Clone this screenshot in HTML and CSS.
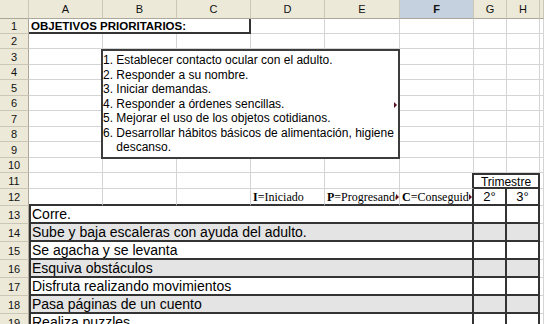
FILE: index.html
```html
<!DOCTYPE html>
<html lang="es">
<head>
    <meta charset="UTF-8">
    <title>Objetivos prioritarios</title>
    <link rel="stylesheet" href="styles.css">
</head>
<body>

    <div class="sheet">
        <div class="row h19">
            <div class="col"></div>
            <div class="col">A</div>
            <div class="col">B</div>
            <div class="col">C</div>
            <div class="col">D</div>
            <div class="col">E</div>
            <div class="col sel">F</div>
            <div class="col">G</div>
            <div class="col">H</div>
            <div class="col"></div>
        </div>

        <div class="row h15">
            <div class="num">1</div>
            <div class="cell title span3">OBJETIVOS PRIORITARIOS:</div>
            <div class="cell"></div><div class="cell"></div><div class="cell"></div>
            <div class="cell"></div><div class="cell"></div><div class="cell"></div>
        </div>
        <div class="row h15">
            <div class="num">2</div>
            <div class="cell"></div><div class="cell"></div><div class="cell"></div>
            <div class="cell"></div><div class="cell"></div><div class="cell"></div>
            <div class="cell"></div><div class="cell"></div><div class="cell"></div>
        </div>
        <div class="row h16">
            <div class="num">3</div>
            <div class="cell"></div><div class="cell"></div><div class="cell"></div>
            <div class="cell"></div><div class="cell"></div><div class="cell"></div>
            <div class="cell"></div><div class="cell"></div><div class="cell"></div>
        </div>
        <div class="row h15">
            <div class="num">4</div>
            <div class="cell"></div><div class="cell"></div><div class="cell"></div>
            <div class="cell"></div><div class="cell"></div><div class="cell"></div>
            <div class="cell"></div><div class="cell"></div><div class="cell"></div>
        </div>
        <div class="row h16">
            <div class="num">5</div>
            <div class="cell"></div><div class="cell"></div><div class="cell"></div>
            <div class="cell"></div><div class="cell"></div><div class="cell"></div>
            <div class="cell"></div><div class="cell"></div><div class="cell"></div>
        </div>
        <div class="row h15">
            <div class="num">6</div>
            <div class="cell"></div><div class="cell"></div><div class="cell"></div>
            <div class="cell"></div><div class="cell"></div><div class="cell"></div>
            <div class="cell"></div><div class="cell"></div><div class="cell"></div>
        </div>
        <div class="row h16">
            <div class="num">7</div>
            <div class="cell"></div><div class="cell"></div><div class="cell"></div>
            <div class="cell"></div><div class="cell"></div><div class="cell"></div>
            <div class="cell"></div><div class="cell"></div><div class="cell"></div>
        </div>
        <div class="row h15">
            <div class="num">8</div>
            <div class="cell"></div><div class="cell"></div><div class="cell"></div>
            <div class="cell"></div><div class="cell"></div><div class="cell"></div>
            <div class="cell"></div><div class="cell"></div><div class="cell"></div>
        </div>
        <div class="row h16">
            <div class="num">9</div>
            <div class="cell"></div><div class="cell"></div><div class="cell"></div>
            <div class="cell"></div><div class="cell"></div><div class="cell"></div>
            <div class="cell"></div><div class="cell"></div><div class="cell"></div>
        </div>
        <div class="row h15">
            <div class="num">10</div>
            <div class="cell"></div><div class="cell"></div><div class="cell"></div>
            <div class="cell"></div><div class="cell"></div><div class="cell"></div>
            <div class="cell"></div><div class="cell"></div><div class="cell"></div>
        </div>

        <div class="row h16">
            <div class="num">11</div>
            <div class="cell"></div><div class="cell"></div><div class="cell"></div>
            <div class="cell"></div><div class="cell"></div><div class="cell edge"></div>
            <div class="cell trim span2">Trimestre</div>
            <div class="cell"></div>
        </div>
        <div class="row h17">
            <div class="num">12</div>
            <div class="cell base"></div><div class="cell base"></div><div class="cell base"></div>
            <div class="cell base key"><span class="txt"><b>I</b>=Iniciado</span></div>
            <div class="cell base key"><span class="txt"><b>P</b>=Progresando</span><span class="more"></span></div>
            <div class="cell base key edge"><span class="txt"><b>C</b>=Conseguido</span><span class="more"></span></div>
            <div class="cell base mark term">2°</div>
            <div class="cell base mark term">3°</div>
            <div class="cell"></div>
        </div>

        <div class="row h18">
            <div class="num">13</div>
            <div class="cell task span6">Corre.</div>
            <div class="cell mark"></div><div class="cell mark"></div><div class="cell"></div>
        </div>
        <div class="row h18 shade">
            <div class="num">14</div>
            <div class="cell task span6">Sube y baja escaleras con ayuda del adulto.</div>
            <div class="cell mark"></div><div class="cell mark"></div><div class="cell"></div>
        </div>
        <div class="row h18">
            <div class="num">15</div>
            <div class="cell task span6">Se agacha y se levanta</div>
            <div class="cell mark"></div><div class="cell mark"></div><div class="cell"></div>
        </div>
        <div class="row h18 shade">
            <div class="num">16</div>
            <div class="cell task span6">Esquiva obstáculos</div>
            <div class="cell mark"></div><div class="cell mark"></div><div class="cell"></div>
        </div>
        <div class="row h18">
            <div class="num">17</div>
            <div class="cell task span6">Disfruta realizando movimientos</div>
            <div class="cell mark"></div><div class="cell mark"></div><div class="cell"></div>
        </div>
        <div class="row h18 shade">
            <div class="num">18</div>
            <div class="cell task span6">Pasa páginas de un cuento</div>
            <div class="cell mark"></div><div class="cell mark"></div><div class="cell"></div>
        </div>
        <div class="row h18">
            <div class="num">19</div>
            <div class="cell task span6">Realiza puzzles</div>
            <div class="cell mark"></div><div class="cell mark"></div><div class="cell"></div>
        </div>

        <!-- text box floating over rows 3-9 -->
        <div class="textbox">
            <p>1. Establecer contacto ocular con el adulto.</p>
            <p>2. Responder a su nombre.</p>
            <p>3. Iniciar demandas.</p>
            <p>4. Responder a órdenes sencillas.</p>
            <p>5. Mejorar el uso de los objetos cotidianos.</p>
            <p>6. Desarrollar hábitos básicos de alimentación, higiene descanso.</p>
            <span class="more"></span>
        </div>
    </div>

</body>
</html>
```

FILE: styles.css
```css
* {
    margin: 0;
    padding: 0;
    box-sizing: border-box;
}

body {
    font-family: "Liberation Sans", Arial, sans-serif;
    background: #fff;
    color: #000;
    overflow: hidden;
}

.sheet {
    position: relative;
    width: 544px;
}

.row {
    display: grid;
    grid-template-columns: 29px 74px 74px 74px 74px 75px 74px 33px 33px 1fr;
}

.h15 { height: 15px; }
.h16 { height: 16px; }
.h17 { height: 17px; }
.h18 { height: 18px; }
.h19 { height: 19px; }

.span2 { grid-column: span 2; }
.span3 { grid-column: span 3; }
.span6 { grid-column: span 6; }

/* headers */
.col {
    background: #ece9d8;
    border-right: 1px solid #cbc7b8;
    border-bottom: 1px solid #aca899;
    font-size: 11px;
    text-align: center;
    padding-top: 3px;
    color: #111;
}

.col.sel {
    background: #c5d1de;
    font-weight: bold;
}

.num {
    background: #ece9d8;
    border-right: 1px solid #aca899;
    border-bottom: 1px solid #cbc7b8;
    font-size: 11px;
    display: flex;
    align-items: center;
    justify-content: center;
    color: #111;
}

/* cells */
.cell {
    position: relative;
    border-right: 1px solid #d4d4d4;
    border-bottom: 1px solid #d4d4d4;
    white-space: nowrap;
    overflow: hidden;
}

.title {
    font-size: 11.5px;
    font-weight: bold;
    padding: 1px 0 0 2px;
    line-height: 13px;
    border-right: 2px solid #333;
    border-bottom: 2px solid #333;
}

.edge {
    border-right: 2px solid #333;
}

.trim {
    font-size: 12px;
    text-align: center;
    line-height: 14px;
    border-top: 2px solid #333;
    border-right: 2px solid #333;
    border-bottom: 2px solid #333;
}

.base {
    border-bottom: 2px solid #333;
}

.key {
    display: flex;
    align-items: center;
    font-family: "Liberation Serif", "Times New Roman", serif;
    font-size: 12px;
    padding: 1px 0 0 2px;
    line-height: 14px;
}

.key .txt {
    flex: 1;
    overflow: hidden;
}

.key .more {
    position: static;
    margin: 0 0 0 0;
    flex: none;
}

.mark {
    border-right: 2px solid #333;
    border-bottom: 2px solid #333;
}

.term {
    font-size: 13px;
    text-align: center;
    line-height: 15px;
}

.task {
    font-size: 14px;
    line-height: 16px;
    padding-left: 1px;
    border-left: 2px solid #333;
    border-right: 2px solid #333;
    border-bottom: 2px solid #333;
}

.shade .task,
.shade .mark {
    background: #e4e4e4;
}

/* overflow marker */
.more {
    width: 0;
    height: 0;
    border-left: 3px solid #5a1020;
    border-top: 3px solid transparent;
    border-bottom: 3px solid transparent;
}

.textbox {
    position: absolute;
    left: 101px;
    top: 49px;
    width: 299px;
    height: 110px;
    background: #fff;
    border: 2px solid #3c3c3c;
    padding: 2px 0 0 0;
    font-size: 12px;
    line-height: 14.5px;
}

.textbox p {
    padding-left: 13.3px;
    text-indent: -13.3px;
}

.textbox .more {
    position: absolute;
    right: 1px;
    top: 51px;
}
```
